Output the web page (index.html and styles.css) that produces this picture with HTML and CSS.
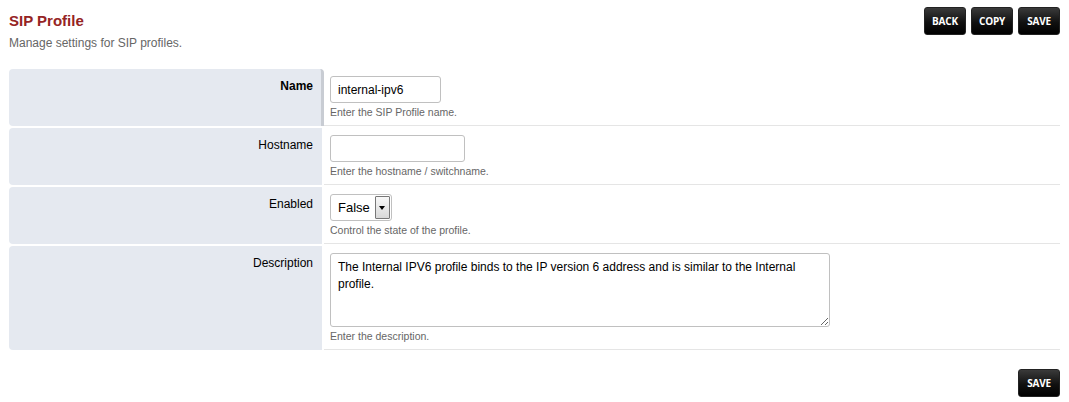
FILE: index.html
```html
<!DOCTYPE html>
<html>
<head>
<meta charset="utf-8">
<title>SIP Profile</title>
<link rel="stylesheet" href="styles.css">
</head>
<body>
<div class="page">
  <div class="header">
    <div class="heading">
      <div class="title">SIP Profile</div>
      <div class="subtitle">Manage settings for SIP profiles.</div>
    </div>
    <div class="actions">
      <button class="btn">BACK</button>
      <button class="btn">COPY</button>
      <button class="btn">SAVE</button>
    </div>
  </div>

  <div class="form">
    <div class="label req">Name</div>
    <div class="field">
      <input class="text name" type="text" value="internal-ipv6">
      <div class="hint">Enter the SIP Profile name.</div>
    </div>

    <div class="label">Hostname</div>
    <div class="field">
      <input class="text host" type="text" value="">
      <div class="hint">Enter the hostname / switchname.</div>
    </div>

    <div class="label">Enabled</div>
    <div class="field">
      <div class="select"><span class="sel-val">False</span><span class="sel-arrow"></span></div>
      <div class="hint">Control the state of the profile.</div>
    </div>

    <div class="label">Description</div>
    <div class="field">
      <textarea class="area">The Internal IPV6 profile binds to the IP version 6 address and is similar to the Internal profile.</textarea>
      <div class="hint">Enter the description.</div>
    </div>
  </div>

  <div class="footer">
    <button class="btn">SAVE</button>
  </div>
</div>
</body>
</html>
```

FILE: styles.css
```css
html, body {
  margin: 0;
  padding: 0;
  background: #fff;
}
body {
  font-family: "Liberation Sans", Arial, sans-serif;
  font-size: 12px;
  color: #000;
}
.page {
  padding: 7px 9px 0 9px;
}
.header {
  display: flex;
  justify-content: space-between;
  align-items: flex-start;
}
.heading {
  padding-top: 5px;
}
.title {
  font-size: 15px;
  font-weight: bold;
  color: #952424;
  line-height: 18px;
}
.subtitle {
  margin-top: 6px;
  font-size: 12px;
  color: #666;
  line-height: 15px;
}
.actions {
  display: flex;
  gap: 5px;
}
.btn {
  height: 28px;
  width: 42px;
  padding: 0;
  border: 1px solid #222;
  border-radius: 3px;
  background: linear-gradient(to bottom, #3a3a3a 0%, #111 55%, #000 100%);
  color: #fff;
  font-family: "Open Sans", "DejaVu Sans", sans-serif;
  font-weight: 700;
  font-size: 10px;
  letter-spacing: -0.2px;
  cursor: pointer;
}
.form {
  margin-top: 18px;
  display: grid;
  grid-template-columns: 313px 1fr;
  column-gap: 2px;
  row-gap: 2px;
}
.label {
  background: #e5e9f0;
  border-radius: 4px 0 0 4px;
  text-align: right;
  padding: 10px 9px 0 0;
  color: #000;
  line-height: 14px;
}
.label.req {
  font-weight: bold;
  border-right: 3px solid #c8ccd3;
  border-radius: 4px 4px 0 4px;
  padding-right: 8px;
  margin-right: -2px;
}
.field {
  padding: 7px 0 7px 6px;
  border-bottom: 1px solid #e5e5e5;
  line-height: 12px;
}
.text {
  display: block;
  box-sizing: border-box;
  height: 27px;
  padding: 0 7px;
  border: 1px solid #c0c0c0;
  border-radius: 3px;
  font-family: "Liberation Sans", Arial, sans-serif;
  font-size: 12px;
  color: #000;
}
.text.name { width: 111px; }
.text.host { width: 135px; }
.select {
  box-sizing: border-box;
  width: 62px;
  height: 27px;
  border: 1px solid #c0c0c0;
  border-radius: 3px;
  display: flex;
  align-items: center;
  justify-content: space-between;
  padding: 0 1px 0 7px;
  font-size: 13px;
}
.sel-arrow {
  width: 15px;
  height: 23px;
  box-sizing: border-box;
  border: 1px solid #777;
  border-radius: 1px;
  background: linear-gradient(to bottom, #f8f8f8, #d8d8d8);
  position: relative;
}
.sel-arrow::after {
  content: "";
  position: absolute;
  left: 3px;
  top: 9px;
  border-left: 3px solid transparent;
  border-right: 3px solid transparent;
  border-top: 4px solid #000;
}
.hint {
  margin-top: 3px;
  font-size: 10.5px;
  color: #666;
  line-height: 12px;
}
.area {
  display: block;
  box-sizing: border-box;
  width: 500px;
  height: 74px;
  padding: 5px 7px;
  border: 1px solid #c0c0c0;
  border-radius: 3px;
  font-family: "Liberation Sans", Arial, sans-serif;
  font-size: 12px;
  line-height: 17px;
  color: #000;
  resize: both;
}
.footer {
  display: flex;
  justify-content: flex-end;
  margin-top: 19px;
}
```
